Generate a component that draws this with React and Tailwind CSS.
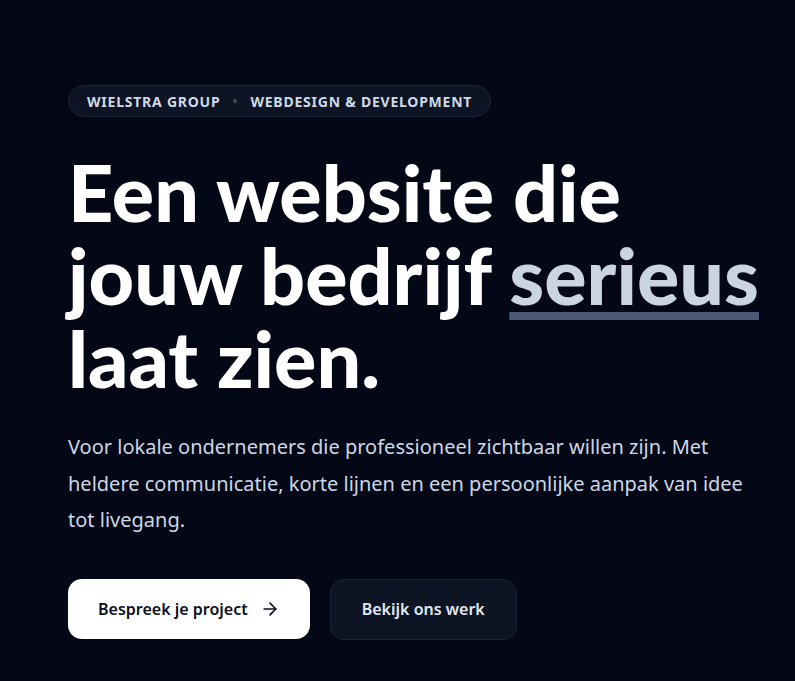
import { ArrowRight } from "lucide-react";

export default function App() {
  return (
    <div className="min-h-screen w-full bg-[#040716] font-['Noto_Sans',sans-serif]">
      <section className="pl-[68px] pr-4 pt-[85px]">
        <div className="inline-flex h-8 items-center gap-[13px] rounded-full border border-[#1c2536] bg-[#0d1424] px-[18px] text-[14px] font-bold uppercase tracking-[0.055em] text-[#cfd9e8]">
          <span>Wielstra Group</span>
          <span className="h-1 w-1 rounded-full bg-[#3b4a62]" />
          <span>Webdesign &amp; Development</span>
        </div>

        <h1 className="mt-[33px] max-w-[710px] font-['Lato',sans-serif] text-[79px] font-black leading-[83px] text-white">
          Een website die jouw bedrijf{" "}
          <span className="text-[#cbd5e1] underline decoration-[#4b5a72] decoration-[8px] underline-offset-[7px]">
            serieus
          </span>{" "}
          laat zien.
        </h1>

        <p className="mt-[30px] max-w-[695px] text-[20px] leading-[36.5px] text-[#cdd7e5]">
          Voor lokale ondernemers die professioneel zichtbaar willen zijn. Met
          heldere communicatie, korte lijnen en een persoonlijke aanpak van idee
          tot livegang.
        </p>

        <div className="mt-[40px] flex items-center gap-5">
          <button className="flex h-[60px] items-center gap-3 rounded-[14px] bg-white px-[30px] text-[16px] font-semibold text-[#0b1020]">
            Bespreek je project
            <ArrowRight className="h-5 w-5" strokeWidth={2} />
          </button>
          <button className="flex h-[61px] items-center rounded-[14px] border border-[#1c2536] bg-[#0d1424] px-[31px] text-[16px] font-semibold text-[#e2e8f0]">
            Bekijk ons werk
          </button>
        </div>
      </section>
    </div>
  );
}
